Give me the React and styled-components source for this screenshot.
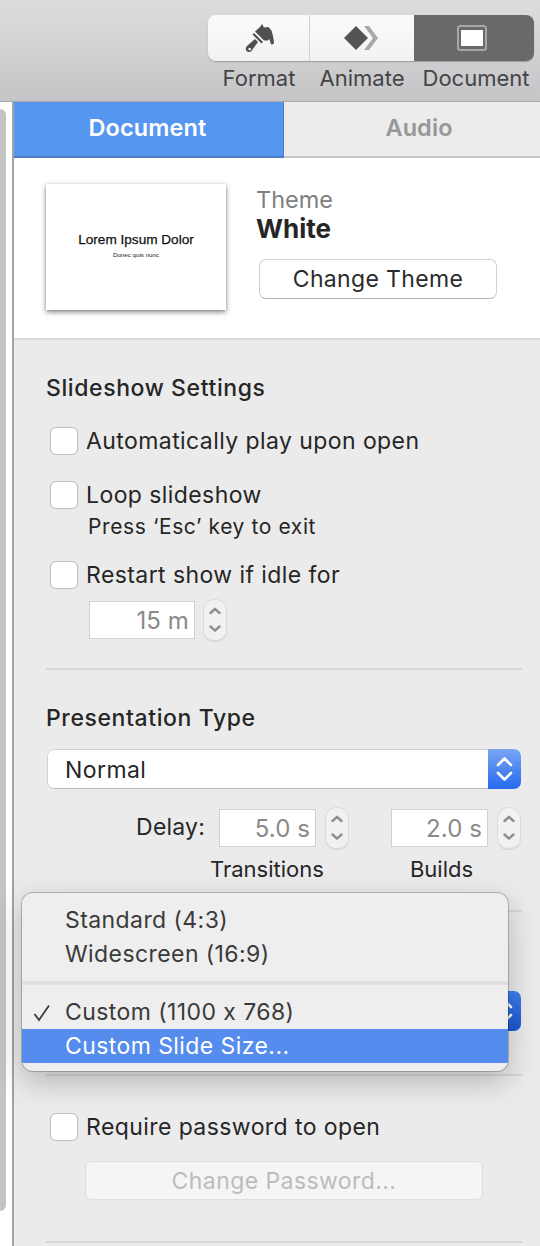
import React from 'react';
import styled, { createGlobalStyle } from 'styled-components';

const GlobalStyle = createGlobalStyle`
  html, body { margin: 0; padding: 0; background: #fff; }
  * { box-sizing: border-box; }
  body {
    font-family: Inter, "Liberation Sans", sans-serif;
    font-feature-settings: "calt" 0;
    color: #262626;
  }
`;

const BrushIcon = () => (
  <svg width="32" height="32" viewBox="0 0 32 32" fill="#505052">
    <path fillRule="evenodd" d="M4.500 23.500 L12 17 L15 20 L9.500 27.500 C8 31 3 31 2.800 27 C2.800 25.500 3.500 24.500 4.500 23.500 Z M6.700 25.700 A1.300 1.300 0 1 0 6.701 25.700 Z" />
    <path d="M9.500 12.500 L11 11 L20 20 L18.500 21.500 Z" />
    <path d="M12 9.500 L17 5 L19 2 L21 5.500 L25.500 5 L28.500 8.500 L30 14 L31 20 C31.200 23 27.800 23.500 27.400 20.500 L26.500 17 L25 18.500 L22.500 18.500 L21 18.500 Z" />
  </svg>
);

const AnimateIcon = () => (
  <svg width="36" height="26" viewBox="0 0 36 26">
    <path d="M20 1 L25 1 L34 13 L25 25 L20 25 L29 13 Z" fill="#a9a9ab" />
    <path d="M0 13 L12 1 L24 13 L12 25 Z" fill="#545456" />
  </svg>
);

const DocumentIcon = () => (
  <svg width="34" height="26" viewBox="0 0 34 26">
    <rect x="1" y="1" width="28" height="24" rx="2.500" fill="none" stroke="#a6a6a8" strokeWidth="2" />
    <rect x="4" y="5" width="22" height="16" fill="#fff" />
  </svg>
);

const StepperArrows = () => (
  <svg width="24" height="42" viewBox="0 0 24 42" fill="none" stroke="#8f8f8f" strokeWidth="2.400" strokeLinecap="round" strokeLinejoin="round">
    <path d="M7.500 14 L12 9.800 L16.500 14" />
    <path d="M7.500 27.500 L12 31.700 L16.500 27.500" />
  </svg>
);

const SelectArrowsIcon = () => (
  <svg width="33" height="40" viewBox="0 0 33 40" fill="none" stroke="#fff" strokeWidth="2.600" strokeLinecap="round" strokeLinejoin="round">
    <path d="M10 16 L16.500 9.500 L23 16" />
    <path d="M10 24 L16.500 30.500 L23 24" />
  </svg>
);

const CheckIcon = () => (
  <svg width="18" height="18" viewBox="0 0 18 18" fill="none" stroke="#3a3a3a" strokeWidth="1.800">
    <path d="M1.500 10 L6 16 L16 1.500" />
  </svg>
);

const Stepper = () => (
  <StepperBox>
    <StepperArrows />
  </StepperBox>
);

const App = () => {
  return (
    <Page>
      <GlobalStyle />
      <Toolbar>
        <Segments>
          <Segment $width={102}><BrushIcon /></Segment>
          <Segment $width={104}><AnimateIcon /></Segment>
          <Segment $width={120} $active><DocumentIcon /></Segment>
        </Segments>
        <ToolLabels>
          <ToolLabel $width={102}>Format</ToolLabel>
          <ToolLabel $width={104}>Animate</ToolLabel>
          <ToolLabel $width={120}>Document</ToolLabel>
        </ToolLabels>
      </Toolbar>

      <Main>
        <Gutter>
          <GutterPanel />
        </Gutter>
        <Panel>
          <Tabs>
            <Tab $active>Document</Tab>
            <Tab>Audio</Tab>
          </Tabs>

          <ThemeSection>
            <Thumb>
              <ThumbTitle>Lorem Ipsum Dolor</ThumbTitle>
              <ThumbSub>Donec quis nunc</ThumbSub>
            </Thumb>
            <ThemeInfo>
              <ThemeLabel>Theme</ThemeLabel>
              <ThemeName>White</ThemeName>
              <ThemeButton>Change Theme</ThemeButton>
            </ThemeInfo>
          </ThemeSection>

          <SettingsSection>
            <Heading>Slideshow Settings</Heading>
            <CheckRow $top={25}><CheckBox />Automatically play upon open</CheckRow>
            <CheckRow $top={26}><CheckBox />Loop slideshow</CheckRow>
            <Hint>Press ‘Esc’ key to exit</Hint>
            <CheckRow $top={20}><CheckBox />Restart show if idle for</CheckRow>
            <IdleRow>
              <Field $width={106}>15 m</Field>
              <Stepper />
            </IdleRow>
          </SettingsSection>

          <TypeSection>
            <Heading>Presentation Type</Heading>
            <Select>
              <SelectText>Normal</SelectText>
              <SelectArrows><SelectArrowsIcon /></SelectArrows>
            </Select>
            <TimingRow>
              <DelayLabel>Delay:</DelayLabel>
              <TimingGroup>
                <TimingFields>
                  <Field $width={97}>5.0 s</Field>
                  <Stepper />
                </TimingFields>
                <TimingName $shift={-9}>Transitions</TimingName>
              </TimingGroup>
              <TimingGroup>
                <TimingFields>
                  <Field $width={97}>2.0 s</Field>
                  <Stepper />
                </TimingFields>
                <TimingName $shift={2}>Builds</TimingName>
              </TimingGroup>
            </TimingRow>
          </TypeSection>

          {/* heading and value of this section sit behind the open menu */}
          <SizeSection>
            <Select $top={45}>
              <SelectText />
              <SelectArrows $deep><SelectArrowsIcon /></SelectArrows>
            </Select>
          </SizeSection>

          <SecuritySection>
            <CheckRow $top={0}><CheckBox />Require password to open</CheckRow>
            <PasswordButton>Change Password...</PasswordButton>
          </SecuritySection>
          <BottomRule />
        </Panel>
      </Main>

      <Menu>
        <MenuItem>Standard (4:3)</MenuItem>
        <MenuItem>Widescreen (16:9)</MenuItem>
        <MenuSeparator />
        <MenuItem><MenuCheck><CheckIcon /></MenuCheck>Custom (1100 x 768)</MenuItem>
        <MenuItem $selected>Custom Slide Size...</MenuItem>
      </Menu>
    </Page>
  );
};

export default App;

const Page = styled.div`
  position: relative;
  width: 540px;
  height: 1246px;
  overflow: hidden;
  display: flex;
  flex-direction: column;
  background: #ebebeb;
`;

const Toolbar = styled.header`
  height: 102px;
  flex: none;
  padding: 15px 6px 0 0;
  display: flex;
  flex-direction: column;
  align-items: flex-end;
  background: linear-gradient(#dddddf, #c5c5c7);
  border-bottom: 1.500px solid #a9a9a9;
`;

const Segments = styled.div`
  display: flex;
  height: 46px;
  border-radius: 8px;
  overflow: hidden;
  box-shadow: 0 1px 1px rgba(0, 0, 0, 0.25);
`;

const Segment = styled.div`
  width: ${(p) => p.$width}px;
  display: flex;
  align-items: center;
  justify-content: center;
  background: ${(p) => (p.$active ? '#69696b' : 'linear-gradient(#fbfbfb, #f1f2f2)')};
  border-right: ${(p) => (p.$active ? 'none' : '1.500px solid #d2d2d2')};

  &:nth-child(2) {
    border-right: none;
  }
`;

const ToolLabels = styled.div`
  display: flex;
  margin-top: 3px;
`;

const ToolLabel = styled.div`
  width: ${(p) => p.$width}px;
  text-align: center;
  font-size: 22px;
  line-height: 28px;
  color: #444446;
  white-space: nowrap;

  &:last-child {
    padding-left: 4px;
  }
`;

const Main = styled.div`
  flex: 1;
  display: flex;
  min-height: 0;
`;

const Gutter = styled.div`
  width: 14px;
  flex: none;
  padding-top: 7px;
  background: #fff;
  border-right: 2px solid #a3a3a3;
`;

const GutterPanel = styled.div`
  width: 6px;
  height: 1102px;
  background: #c4c4c4;
  border-radius: 0 6px 6px 0;
`;

const Panel = styled.main`
  flex: 1;
  min-width: 0;
  display: flex;
  flex-direction: column;
`;

const Tabs = styled.nav`
  display: flex;
  height: 56px;
  flex: none;
`;

const Tab = styled.div`
  width: ${(p) => (p.$active ? '270px' : 'auto')};
  flex: ${(p) => (p.$active ? 'none' : '1')};
  display: flex;
  align-items: center;
  justify-content: center;
  padding: ${(p) => (p.$active ? '0 2px 4px 0' : '0 0 4px 14px')};
  font-size: 23.500px;
  font-weight: 600;
  letter-spacing: 0.100px;
  color: ${(p) => (p.$active ? '#fff' : '#979797')};
  background: ${(p) => (p.$active ? '#5596f0' : '#ececec')};
  border-bottom: 2px solid ${(p) => (p.$active ? '#4a7fc8' : '#c6c6c8')};
  border-right: ${(p) => (p.$active ? '1.500px solid #4a7fc8' : 'none')};
`;

const ThemeSection = styled.section`
  height: 182px;
  flex: none;
  display: flex;
  padding: 26px 0 0 32px;
  background: #fff;
  border-bottom: 2px solid #dadada;
`;

const Thumb = styled.div`
  width: 180px;
  height: 126px;
  flex: none;
  display: flex;
  flex-direction: column;
  align-items: center;
  justify-content: center;
  padding-bottom: 2px;
  background: #fff;
  box-shadow: 0 2px 5px rgba(0, 0, 0, 0.5), 0 0 1px rgba(0, 0, 0, 0.15);
`;

const ThumbTitle = styled.div`
  font-family: "Liberation Sans", Arial, sans-serif;
  font-size: 13.600px;
  line-height: 16px;
  color: #111;
  -webkit-text-stroke: 0.250px #111;
  white-space: nowrap;
`;

const ThumbSub = styled.div`
  font-family: "Liberation Sans", Arial, sans-serif;
  font-size: 6.200px;
  line-height: 10px;
  margin-top: 2px;
  color: #222;
`;

const ThemeInfo = styled.div`
  margin-left: 31px;
  padding-top: 1px;
`;

const ThemeLabel = styled.div`
  font-size: 23.500px;
  line-height: 30px;
  margin-left: -1px;
  color: #808080;
`;

const ThemeName = styled.div`
  font-size: 26px;
  font-weight: 700;
  line-height: 28px;
  margin-left: -1px;
  color: #262626;
`;

const ThemeButton = styled.div`
  width: 238px;
  height: 40px;
  margin: 16px 0 0 2px;
  display: flex;
  align-items: center;
  justify-content: center;
  font-size: 23px;
  letter-spacing: 0.350px;
  color: #2b2b2b;
  background: #fff;
  border: 1px solid #d0d0d0;
  border-bottom-color: #b4b4b4;
  border-radius: 7px;
`;

const SettingsSection = styled.section`
  margin: 0 18px 0 32px;
  height: 330px;
  padding-top: 34px;
  flex: none;
  border-bottom: 2px solid #d7d7d7;
`;

const Heading = styled.h3`
  margin: 0;
  font-size: 23px;
  font-weight: 500;
  letter-spacing: 0.600px;
  line-height: 28px;
  color: #262626;
`;

const CheckRow = styled.div`
  display: flex;
  align-items: center;
  gap: 8px;
  height: 28px;
  margin-top: ${(p) => p.$top}px;
  padding-left: 4px;
  font-size: 23px;
  letter-spacing: 0.420px;
  color: #262626;
  white-space: nowrap;
`;

const CheckBox = styled.span`
  width: 28px;
  height: 28px;
  flex: none;
  background: #fff;
  border: 1px solid #bdbdbd;
  border-radius: 6px;
`;

const Hint = styled.div`
  margin: 4px 0 0 42px;
  font-size: 21px;
  letter-spacing: 0.600px;
  line-height: 28px;
  color: #262626;
`;

const IdleRow = styled.div`
  display: flex;
  align-items: center;
  gap: 8px;
  margin: 10px 0 0 43px;
`;

const Field = styled.div`
  width: ${(p) => p.$width}px;
  height: 38px;
  flex: none;
  display: flex;
  align-items: center;
  justify-content: flex-end;
  padding-right: 5px;
  font-size: 24px;
  letter-spacing: 0.100px;
  color: #8a8a8a;
  background: #fff;
  border: 1.500px solid #d0d0d0;
`;

const StepperBox = styled.div`
  width: 24px;
  height: 42px;
  flex: none;
  display: flex;
  align-items: center;
  justify-content: center;
  background: #f1f1f1;
  border-radius: 11px;
  box-shadow: inset 0 0 0 1px #dcdcdc, 0 1px 1px rgba(0, 0, 0, 0.1);
`;

const TypeSection = styled.section`
  margin: 0 18px 0 32px;
  height: 242px;
  padding-top: 34px;
  flex: none;
  border-bottom: 2px solid #d7d7d7;
`;

const Select = styled.div`
  display: flex;
  height: 40px;
  margin: ${(p) => p.$top ?? 17}px 1px 0 1px;
  background: #fff;
  border-radius: 7px;
  overflow: hidden;
`;

const SelectText = styled.div`
  flex: 1;
  display: flex;
  align-items: center;
  padding: 2px 0 0 17px;
  font-size: 23px;
  letter-spacing: 0.420px;
  color: #262626;
  border: 1px solid #d2d2d2;
  border-right: none;
  border-bottom-color: #b8b8b8;
  border-radius: 7px 0 0 7px;
`;

const SelectArrows = styled.div`
  width: 33px;
  display: flex;
  align-items: center;
  justify-content: center;
  background: ${(p) => (p.$deep ? 'linear-gradient(#3f7ff0, #1c56cf)' : 'linear-gradient(#7ba6f3, #2469f0)')};
`;

const TimingRow = styled.div`
  display: flex;
  align-items: flex-start;
  margin-top: 18px;
`;

const DelayLabel = styled.div`
  width: 159px;
  text-align: right;
  font-size: 23px;
  letter-spacing: 0.200px;
  line-height: 40px;
  color: #262626;
`;

const TimingGroup = styled.div`
  margin-left: 14px;

  & + & {
    margin-left: 42px;
  }
`;

const TimingFields = styled.div`
  display: flex;
  align-items: center;
  gap: 9px;
`;

const TimingName = styled.div`
  margin: 6px 0 0 ${(p) => p.$shift}px;
  width: 97px;
  text-align: center;
  font-size: 22px;
  line-height: 28px;
  color: #262626;
  white-space: nowrap;
`;

const SizeSection = styled.section`
  margin: 0 18px 0 32px;
  height: 164px;
  padding-top: 34px;
  flex: none;
  border-bottom: 2px solid #d7d7d7;
`;

const SecuritySection = styled.section`
  margin: 0 18px 0 32px;
  height: 165px;
  padding-top: 37px;
  flex: none;
`;

const PasswordButton = styled.div`
  width: 398px;
  height: 39px;
  margin: 20px 0 0 39px;
  display: flex;
  align-items: center;
  justify-content: center;
  font-size: 23px;
  letter-spacing: 0.420px;
  color: #bcbcbc;
  background: #f5f5f5;
  border: 1px solid #dedede;
  border-radius: 7px;
`;

const BottomRule = styled.div`
  margin: 0 18px 0 32px;
  height: 2px;
  flex: none;
  background: #d7d7d7;
`;

const Menu = styled.div`
  position: absolute;
  left: 22px;
  top: 893px;
  width: 486px;
  height: 178px;
  padding-top: 10px;
  background: #eeeeee;
  border-radius: 11px;
  box-shadow: 0 0 0 1px rgba(0, 0, 0, 0.22), 0 10px 30px rgba(0, 0, 0, 0.24);
  overflow: hidden;
`;

const MenuItem = styled.div`
  position: relative;
  height: 34px;
  display: flex;
  align-items: center;
  padding-left: 43px;
  font-size: 23px;
  letter-spacing: 0.420px;
  color: ${(p) => (p.$selected ? '#fff' : '#3a3a3a')};
  background: ${(p) => (p.$selected ? '#568cee' : 'transparent')};
`;

const MenuCheck = styled.span`
  position: absolute;
  left: 11px;
  top: 9px;
  display: flex;
`;

const MenuSeparator = styled.div`
  height: 4px;
  margin: 10px 0;
  background: #e0e0e0;
`;
